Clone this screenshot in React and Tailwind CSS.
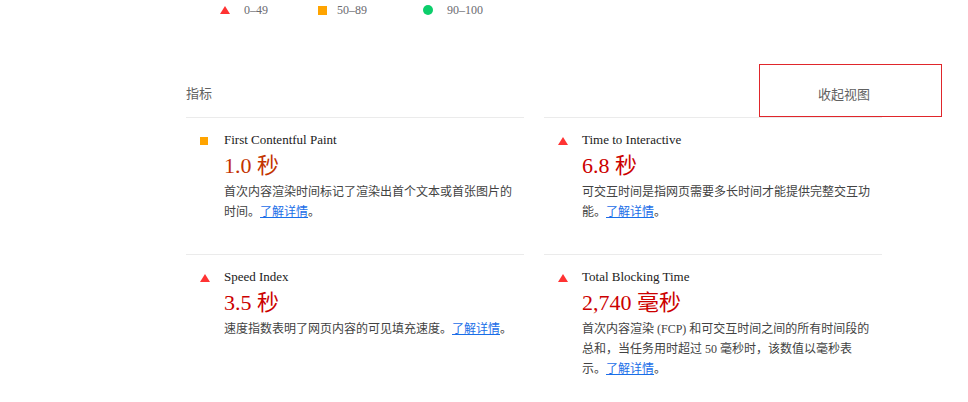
import React from 'react'

const serif = { fontFamily: '"Liberation Serif", "Noto Sans CJK SC", serif' }

const metrics = [
  {
    title: 'First Contentful Paint',
    value: '1.0 秒',
    level: 'average',
    desc: '首次内容渲染时间标记了渲染出首个文本或首张图片的时间。',
  },
  {
    title: 'Time to Interactive',
    value: '6.8 秒',
    level: 'fail',
    desc: '可交互时间是指网页需要多长时间才能提供完整交互功能。',
  },
  {
    title: 'Speed Index',
    value: '3.5 秒',
    level: 'fail',
    desc: '速度指数表明了网页内容的可见填充速度。',
  },
  {
    title: 'Total Blocking Time',
    value: '2,740 毫秒',
    level: 'fail',
    desc: '首次内容渲染 (FCP) 和可交互时间之间的所有时间段的总和，当任务用时超过 50 毫秒时，该数值以毫秒表示。',
  },
]

function Triangle() {
  return (
    <svg width="10" height="8" viewBox="0 0 10 8" className="block">
      <polygon points="5,0 10,8 0,8" fill="#ff3333" />
    </svg>
  )
}

function Square() {
  return <div className="h-[8px] w-[8px] bg-[#ffa400]" />
}

function Circle() {
  return <div className="h-[10px] w-[10px] rounded-full bg-[#0cce6b]" />
}

function Legend() {
  return (
    <div className="flex h-5 items-center pl-[34px] text-[12px] text-[#6b6b70]" style={serif}>
      <div className="flex w-[98px] items-center">
        <Triangle />
        <span className="ml-[14px]">0–49</span>
      </div>
      <div className="flex w-[105px] items-center">
        <div className="h-[9px] w-[9px] bg-[#ffa400]" />
        <span className="ml-[10px]">50–89</span>
      </div>
      <div className="flex items-center">
        <Circle />
        <span className="ml-[14px]">90–100</span>
      </div>
    </div>
  )
}

function MetricCard({ metric, last }) {
  const fail = metric.level === 'fail'
  return (
    <div
      className={`flex h-[137px] border-t border-[#ebebeb] pt-[14px] pl-[14px] ${
        last ? 'box-content border-b' : ''
      }`}
    >
      <div className="flex h-4 w-[10px] items-center pt-[2px]">
        {fail ? <Triangle /> : <Square />}
      </div>
      <div className="ml-[14px] flex-1">
        <div className="text-[13px] leading-4 text-[#212121]" style={serif}>
          {metric.title}
        </div>
        <div
          className={`mt-1 text-[22px] leading-[28px] ${
            fail ? 'text-[#cc0000]' : 'text-[#c33300]'
          }`}
          style={serif}
        >
          {metric.value}
        </div>
        <p
          className="mt-[2px] max-w-[290px] text-[12px] leading-5 text-[#424242]"
          style={serif}
        >
          {metric.desc}
          <a href="#" className="text-[#1a6ee8] underline">
            了解详情
          </a>
          。
        </p>
      </div>
    </div>
  )
}

export default function App() {
  return (
    <div className="h-[402px] w-[968px] overflow-hidden bg-white">
      <div className="ml-[186px] w-[696px]">
        <Legend />

        <div className="mt-[44px] flex h-[53px] items-start justify-between">
          <div
            className="flex h-[53px] items-end pb-[13px] text-[13px] leading-5 text-[#616161]"
            style={serif}
          >
            指标
          </div>
          <button
            className="-mr-[60px] flex h-[53px] w-[183px] items-end border border-[#e0262b] pb-[11px] pl-[58px] text-[13px] leading-5 text-[#616161]"
            style={serif}
          >
            收起视图
          </button>
        </div>

        <div className="grid grid-cols-2 gap-x-5">
          {metrics.map((m, i) => (
            <MetricCard key={m.title} metric={m} last={i >= 2} />
          ))}
        </div>
      </div>
    </div>
  )
}
